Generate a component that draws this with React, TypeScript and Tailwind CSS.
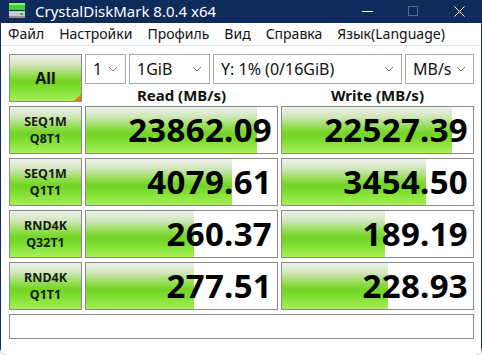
import React from "react";

const barBg =
  "bg-[linear-gradient(to_bottom,#eef1ec_0%,#cfe6b8_22%,#8fdc4a_45%,#72d424_58%,#82e035_75%,#a8f05a_100%)]";

type Row = { top: string; bottom: string; read: string; write: string; rp: number; wp: number };

const rows: Row[] = [
  { top: "SEQ1M", bottom: "Q8T1", read: "23862.09", write: "22527.39", rp: 171, wp: 170 },
  { top: "SEQ1M", bottom: "Q1T1", read: "4079.61", write: "3454.50", rp: 146, wp: 144 },
  { top: "RND4K", bottom: "Q32T1", read: "260.37", write: "189.19", rp: 108, wp: 103 },
  { top: "RND4K", bottom: "Q1T1", read: "277.51", write: "228.93", rp: 108, wp: 106 },
];

function Chevron() {
  return (
    <svg width="10" height="6" viewBox="0 0 10 6" className="shrink-0">
      <path d="M1 1 L5 5 L9 1" fill="none" stroke="#7a7a7a" strokeWidth="1" />
    </svg>
  );
}

function Select({ w, text }: { w: string; text: string }) {
  return (
    <div className={`${w} h-[30px] border border-[#a8a8a8] bg-white flex items-center justify-between pl-[7px] pr-[7px]`}>
      <span className="text-[16px] text-[#111]">{text}</span>
      <Chevron />
    </div>
  );
}

function Result({ value, width }: { value: string; width: number }) {
  return (
    <div className="relative h-[48px] border border-[#8a8a8a] bg-white overflow-hidden">
      <div className={`absolute left-0 top-0 bottom-0 ${barBg}`} style={{ width }} />
      <div className="relative h-full flex items-center justify-end pr-[5px]">
        <span className="text-[33px] font-bold text-black leading-none tracking-[0.3px]">{value}</span>
      </div>
    </div>
  );
}

export default function App() {
  return (
    <div className="w-[482px] h-[355px] bg-white" style={{ fontFamily: '"Noto Sans", "Open Sans", sans-serif' }}>
      <div className="w-full h-full bg-[#0e2b5b] rounded-b-[7px] flex flex-col overflow-hidden">
        {/* title bar */}
        <div className="h-[30px] flex items-center text-white">
          <svg width="18" height="16" viewBox="0 0 18 16" className="ml-[8px] mr-[9px]">
            <rect x="1" y="0" width="16" height="7" fill="#3fcf3a" />
            <rect x="1" y="0" width="16" height="2" fill="#8cef7c" />
            <rect x="1" y="8" width="16" height="7" fill="#c8cdd2" />
            <rect x="1" y="13" width="16" height="2" fill="#8f959c" />
            <rect x="12" y="10" width="3" height="2" fill="#2fbf2f" />
          </svg>
          <span className="text-[15px]">CrystalDiskMark 8.0.4 x64</span>
          <div className="ml-auto flex items-center">
            <div className="w-[46px] flex justify-center">
              <div className="w-[11px] h-[1px] bg-white" />
            </div>
            <div className="w-[46px] flex justify-center">
              <div className="w-[10px] h-[10px] border border-[#56698c]" />
            </div>
            <div className="w-[46px] flex justify-center">
              <svg width="11" height="11" viewBox="0 0 11 11">
                <path d="M0.5 0.5 L10.5 10.5 M10.5 0.5 L0.5 10.5" stroke="white" strokeWidth="1" />
              </svg>
            </div>
          </div>
        </div>

        {/* client area */}
        <div className="flex-1 mx-[1px] mb-[1px] bg-white rounded-b-[6px] flex flex-col">
          <div className="h-[23px] flex items-center gap-[15px] pl-[7px] text-[14px] text-[#111] border-b border-[#e2e2e2]">
            <span>Файл</span>
            <span>Настройки</span>
            <span>Профиль</span>
            <span>Вид</span>
            <span>Справка</span>
            <span>Язык(Language)</span>
          </div>

          <div className="pl-[8px] pt-[8px] grid grid-cols-[73px_193px_193px] auto-rows-[48px] gap-x-[3px] gap-y-[4px]">
            <div className={`relative border border-[#8a8a8a] ${barBg} flex items-center justify-center`}>
              <span className="text-[16px] font-bold text-[#111]">All</span>
              <div className="absolute right-0 bottom-0 w-0 h-0 border-l-[7px] border-l-transparent border-b-[7px] border-b-[#f07b10]" />
            </div>
            <div className="col-span-2 flex flex-col">
              <div className="flex gap-[3px]">
                <Select w="w-[41px]" text="1" />
                <Select w="w-[81px]" text="1GiB" />
                <Select w="w-[189px]" text="Y: 1% (0/16GiB)" />
                <Select w="w-[69px]" text="MB/s" />
              </div>
              <div className="flex-1 grid grid-cols-2 gap-x-[3px] items-center">
                <div className="text-center text-[15px] font-bold text-[#111]">Read (MB/s)</div>
                <div className="text-center text-[15px] font-bold text-[#111]">Write (MB/s)</div>
              </div>
            </div>

            {rows.map((r, i) => (
              <React.Fragment key={i}>
                <div className={`border border-[#8a8a8a] ${barBg} flex flex-col items-center justify-center leading-[17px] text-[12.5px] font-bold text-[#1a1a1a]`}>
                  <span>{r.top}</span>
                  <span>{r.bottom}</span>
                </div>
                <Result value={r.read} width={r.rp} />
                <Result value={r.write} width={r.wp} />
              </React.Fragment>
            ))}

            <div className="col-span-3 h-[25px] border border-[#8a8a8a] bg-white" />
          </div>
        </div>
      </div>
    </div>
  );
}
